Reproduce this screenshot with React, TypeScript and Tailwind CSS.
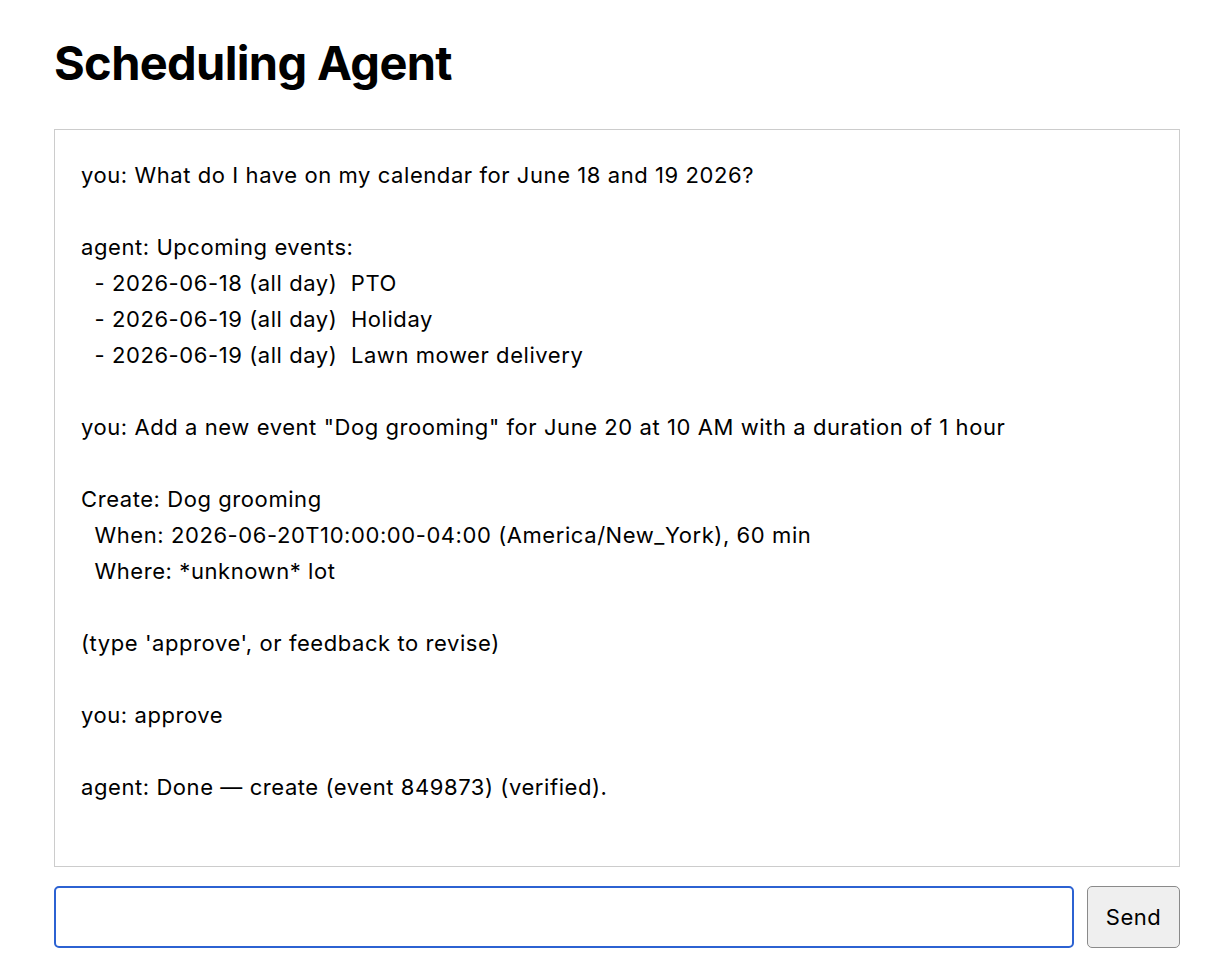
import React from "react";

const transcript = `you: What do I have on my calendar for June 18 and 19 2026?

agent: Upcoming events:
  - 2026-06-18 (all day)  PTO
  - 2026-06-19 (all day)  Holiday
  - 2026-06-19 (all day)  Lawn mower delivery

you: Add a new event "Dog grooming" for June 20 at 10 AM with a duration of 1 hour

Create: Dog grooming
  When: 2026-06-20T10:00:00-04:00 (America/New_York), 60 min
  Where: *unknown* lot

(type 'approve', or feedback to revise)

you: approve

agent: Done — create (event 849873) (verified).`;

export default function App() {
  return (
    <div
      className="min-h-[972px] bg-white text-black"
      style={{ fontFamily: "Inter, 'Noto Sans', 'Liberation Sans', sans-serif" }}
    >
      <div className="ml-[54px] w-[1126px] pt-[34px]">
        <h1 className="text-[47px] font-bold leading-[58px] tracking-[-0.65px]">Scheduling Agent</h1>
        <div className="mt-[37px] h-[738px] border border-[#cccccc] px-[26px] pt-[27px] text-[22px] leading-[36px] tracking-[0.57px] whitespace-pre-wrap">
          {transcript}
        </div>
        <div className="mt-[19px] flex gap-[13px]">
          <input
            type="text"
            className="h-[62px] flex-1 rounded-[5px] border-2 border-[#2c62d2] bg-white px-3 text-[22px] outline-none"
          />
          <button className="h-[62px] w-[93px] rounded-[5px] border border-[#8a8a8a] bg-[#efefef] pt-[1px] text-[22px] tracking-[0.5px] text-black">
            Send
          </button>
        </div>
      </div>
    </div>
  );
}
